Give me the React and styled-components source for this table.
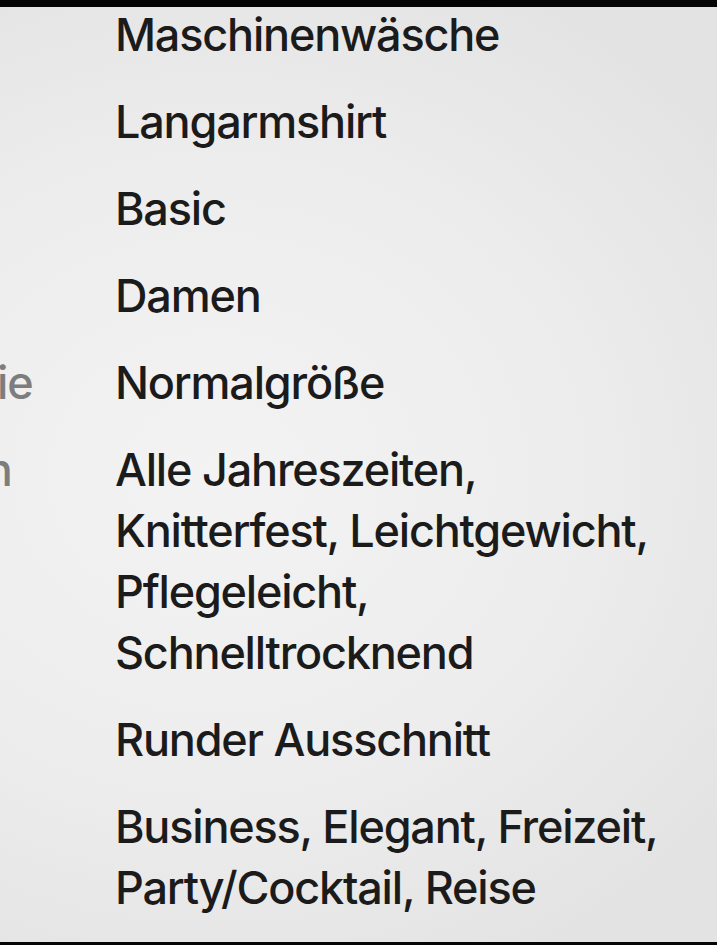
import React from 'react';
import styled, { createGlobalStyle } from 'styled-components';

const GlobalStyle = createGlobalStyle`
  html, body {
    margin: 0;
    padding: 0;
    background: #000;
  }
  body {
    font-family: Inter, "Noto Sans", "Liberation Sans", sans-serif;
  }
`;

const details = [
  { label: 'Pflege', value: ['Maschinenwäsche'] },
  { label: 'Ärmel', value: ['Langarmshirt'] },
  { label: 'Stil', value: ['Basic'] },
  { label: 'Zielgruppe', value: ['Damen'] },
  { label: 'Größenkategorie', value: ['Normalgröße'] },
  {
    label: 'Besonderheiten',
    value: ['Alle Jahreszeiten,', 'Knitterfest, Leichtgewicht,', 'Pflegeleicht,', 'Schnelltrocknend'],
  },
  { label: 'Ausschnitt', value: ['Runder Ausschnitt'] },
  { label: 'Anlass', value: ['Business, Elegant, Freizeit,', 'Party/Cocktail, Reise'] },
];

const Frame = styled.div`
  box-sizing: border-box;
  width: 717px;
  height: 945px;
  overflow: hidden;
  border-top: 7px solid #050505;
  border-bottom: 3px solid #050505;
  background: radial-gradient(ellipse 90% 60% at 30% 50%, #f3f3f3 0%, #ededed 55%, #e3e3e3 100%);
`;

/* the label column runs off the left edge of the crop */
const Table = styled.dl`
  display: grid;
  grid-template-columns: 385px 1fr;
  column-gap: 43px;
  row-gap: 26px;
  margin: -3px 0 0 -313px;
  padding: 0;
`;

const Label = styled.dt`
  margin: 0;
  font-size: 45px;
  font-weight: 500;
  line-height: 61px;
  color: #7d7d7d;
  white-space: nowrap;
  letter-spacing: -1.1px;
`;

const Value = styled.dd`
  margin: 0;
  font-size: 45px;
  font-weight: 500;
  line-height: 61px;
  color: #1b1b1b;
  white-space: nowrap;
  letter-spacing: -1.2px;
`;

const Line = styled.span`
  display: block;
`;

export default function App() {
  return (
    <>
      <GlobalStyle />
      <Frame>
        <Table>
          {details.map((row) => (
            <React.Fragment key={row.label}>
              <Label>{row.label}</Label>
              <Value>
                {row.value.map((line) => (
                  <Line key={line}>{line}</Line>
                ))}
              </Value>
            </React.Fragment>
          ))}
        </Table>
      </Frame>
    </>
  );
}
